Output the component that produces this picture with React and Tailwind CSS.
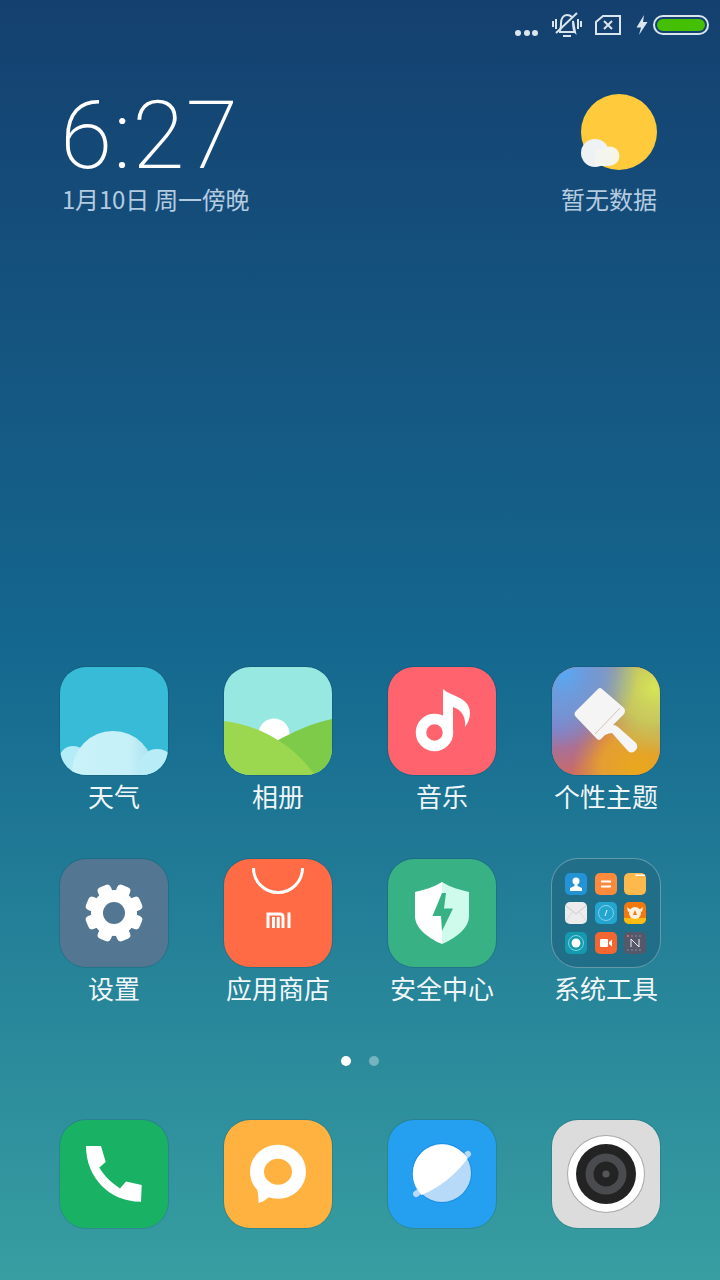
const cjk = "font-['Noto_Sans_CJK_SC','Liberation_Sans',sans-serif]"

function Icon({ children, className = '' }) {
  return (
    <div className={`w-[108px] h-[108px] rounded-[26px] overflow-hidden ring-1 ring-black/10 ${className}`}>
      <svg width="108" height="108" viewBox="0 0 108 108" className="block">
        {children}
      </svg>
    </div>
  )
}

function Weather() {
  return (
    <Icon className="bg-[#38bbd6]">
      <defs>
        <linearGradient id="cloud" x1="0" y1="0" x2="1" y2="0">
          <stop offset="0" stopColor="#c9f2f9" />
          <stop offset="0.7" stopColor="#c6f0f8" />
          <stop offset="1" stopColor="#a5e0ee" />
        </linearGradient>
      </defs>
      <circle cx="13" cy="93" r="14" fill="#b4ecf8" />
      <circle cx="53" cy="105" r="41" fill="url(#cloud)" />
      <circle cx="97" cy="100" r="18" fill="#b8edf8" />
    </Icon>
  )
}

function Gallery() {
  return (
    <Icon className="bg-[#97e8e1]">
      <circle cx="50" cy="67" r="15.5" fill="#fff" />
      <path d="M108 52 C86 57 68 65 51 75 L70 108 L108 108 Z" fill="#7ecb4a" />
      <path d="M0 54 C32 58 66 74 91 108 L0 108 Z" fill="#9bd850" />
    </Icon>
  )
}

function Music() {
  return (
    <Icon className="bg-[#fe636e]">
      <circle cx="46.5" cy="65.5" r="13.5" fill="none" stroke="#fff" strokeWidth="10.5" />
      <path d="M55 22 C62 29 82 30 82 46 C82 51 80 56 77 60 C78 52 75 43 65 40 L65 66 L55 66 Z" fill="#fff" />
    </Icon>
  )
}

function Theme() {
  return (
    <Icon className="bg-[#c08a70]">
      <defs>
        <radialGradient id="t1" cx="0.1" cy="0.05" r="0.7">
          <stop offset="0" stopColor="#58a8f4" />
          <stop offset="0.55" stopColor="#6a9ce0" stopOpacity="0.8" />
          <stop offset="1" stopColor="#6a9ce0" stopOpacity="0" />
        </radialGradient>
        <radialGradient id="t2" cx="0.95" cy="0.2" r="0.62">
          <stop offset="0" stopColor="#d6e656" />
          <stop offset="0.5" stopColor="#c5d85e" stopOpacity="0.8" />
          <stop offset="1" stopColor="#a8cc80" stopOpacity="0" />
        </radialGradient>
        <radialGradient id="t3" cx="0.8" cy="0.95" r="0.62">
          <stop offset="0" stopColor="#e9a81c" />
          <stop offset="0.55" stopColor="#e8a828" stopOpacity="0.85" />
          <stop offset="1" stopColor="#e8a828" stopOpacity="0" />
        </radialGradient>
        <radialGradient id="t4" cx="0.05" cy="0.55" r="0.45">
          <stop offset="0" stopColor="#8c76c0" />
          <stop offset="1" stopColor="#8c76c0" stopOpacity="0" />
        </radialGradient>
      </defs>
      <rect width="108" height="108" fill="#c96a68" />
      <rect width="108" height="108" fill="url(#t3)" />
      <rect width="108" height="108" fill="url(#t2)" />
      <rect width="108" height="108" fill="url(#t4)" />
      <rect width="108" height="108" fill="url(#t1)" />
      <path
        d="M46 22 Q48 20 50 22 L72 41 Q74 44 72 47 L61 58 Q64 58 66 60 L84 76 Q87 80 83 84 Q79 87 76 84 L60 66 Q57 66 53 68 L49 72 Q47 74 45 72 L24 50 Q21 47 24 44 Z"
        fill="#f5f5f5"
      />
      <line x1="68" y1="41" x2="43" y2="67" stroke="#c9b8a0" strokeWidth="0.8" />
    </Icon>
  )
}

function Settings() {
  const angles = [22.5, 67.5, 112.5, 157.5, 202.5, 247.5, 292.5, 337.5]
  return (
    <Icon className="bg-[#537692]">
      <circle cx="54" cy="54" r="23" fill="#fff" />
      {angles.map((a) => (
        <rect key={a} x="47" y="25" width="14" height="14" rx="4" fill="#fff" transform={`rotate(${a} 54 54)`} />
      ))}
      <circle cx="54" cy="54" r="11" fill="#537692" />
    </Icon>
  )
}

function Store() {
  return (
    <Icon className="bg-[#fe6b45]">
      <path d="M29.5 9 A24.5 24.5 0 0 0 78.5 9" fill="none" stroke="#fff" strokeWidth="3" />
      <path d="M44 69 V55 H56 Q59 55 59 58 V69 M49.5 69 V58 M54.2 69 V58" fill="none" stroke="#fff" strokeWidth="3" />
      <rect x="63.5" y="53.5" width="3" height="15.5" fill="#fff" />
    </Icon>
  )
}

function Security() {
  return (
    <Icon className="bg-[#38b185]">
      <path d="M54 23 C46 28 36 31 27 33 L27 57 C27 70 42 80 54 85 Z" fill="#fff" />
      <path d="M54 23 C62 28 72 31 81 33 L81 57 C81 70 66 80 54 85 Z" fill="#cffbec" />
      <path d="M54 34 L44.5 57 L53 57 L54 72 L65 49.5 L56 49.5 L58 34 Z" fill="#38b185" />
    </Icon>
  )
}

function Mini({ bg, children }) {
  return (
    <div className={`w-[22px] h-[22px] rounded-[5px] overflow-hidden ${bg}`}>
      <svg width="22" height="22" viewBox="0 0 22 22" className="block">
        {children}
      </svg>
    </div>
  )
}

function Folder() {
  return (
    <div className="w-[110px] h-[110px] -m-px rounded-[27px] bg-[#216e88] border border-white/30 grid grid-cols-3 gap-x-[7px] gap-y-[7.5px] px-[13px] py-[13.5px]">
      <Mini bg="bg-[#2393d6]">
        <circle cx="11" cy="8" r="3.5" fill="#fff" />
        <path d="M9.5 11 H12.5 V13 L17 15 V18 H5 V15 L9.5 13 Z" fill="#fff" />
      </Mini>
      <Mini bg="bg-[#fe8a3c]">
        <rect x="6" y="7.5" width="10" height="2" fill="#fff" />
        <rect x="6" y="12.5" width="10" height="2" fill="#fff" />
      </Mini>
      <Mini bg="bg-[#fdb94c]">
        <path d="M11 1.5 L21 1.5 V3 H12 Z" fill="#fff" />
      </Mini>
      <Mini bg="bg-[#ececec]">
        <path d="M0 3 L11 12 L22 3" fill="none" stroke="#c9c9c9" strokeWidth="1" />
        <path d="M0 20 L8 9 M22 20 L14 9" stroke="#d8d8d8" strokeWidth="1" />
      </Mini>
      <Mini bg="bg-[#24a5cf]">
        <circle cx="11" cy="11" r="7.5" fill="none" stroke="#9adcee" strokeWidth="0.8" />
        <path d="M12 8 L10 14" stroke="#d8f3fa" strokeWidth="1" />
      </Mini>
      <Mini bg="bg-[#f3780e]">
        <rect y="16" width="22" height="6" fill="#fdbb13" />
        <circle cx="11" cy="11" r="6" fill="#fff2de" />
        <path d="M3 5 L7 8 L4 10 Z M19 5 L15 8 L18 10 Z" fill="#fff2de" />
        <path d="M11 8 L13 13 H9 Z" fill="#f3780e" />
      </Mini>
      <Mini bg="bg-[#149aae]">
        <circle cx="11" cy="11" r="7.5" fill="none" stroke="#a0e0e6" strokeWidth="0.8" />
        <circle cx="11" cy="11" r="4.5" fill="#fff" />
      </Mini>
      <Mini bg="bg-[#f36632]">
        <rect x="5" y="7" width="8" height="8" rx="1" fill="#fff" />
        <path d="M14 10 L17 7.5 V14.5 L14 12 Z" fill="#fff" />
      </Mini>
      <Mini bg="bg-[#54586a]">
        <path d="M7 15 V7 L15 15 V7" fill="none" stroke="#f0f0f0" strokeWidth="1" />
        <rect x="3" y="3" width="2" height="2" fill="#e8604c" />
        <path d="M7 4 H19 M3 18 H19" stroke="#8a8d9a" strokeWidth="1" strokeDasharray="2 2" />
      </Mini>
    </div>
  )
}

function Phone() {
  return (
    <Icon className="bg-[#19b265]">
      <path
        d="M26 26 H41 L45.7 42 L39.3 47.5 C44 56 52 63 60 68.5 L66 61.5 L81.7 65 L81 81.7 C50 82 26 58 26 26 Z"
        fill="#fff"
      />
    </Icon>
  )
}

function Message() {
  return (
    <Icon className="bg-[#ffb23f]">
      <path d="M33 68 C34 74 35 79 34.3 83 C39 82 43 79 47 75 Z" fill="#fff" />
      <ellipse cx="54" cy="51.7" rx="21" ry="20" fill="none" stroke="#fff" strokeWidth="14" />
    </Icon>
  )
}

function Browser() {
  return (
    <Icon className="bg-[#259ff0]">
      <line x1="28" y1="74" x2="80" y2="34" stroke="#b8daf9" strokeWidth="6" strokeLinecap="round" />
      <circle cx="54" cy="53" r="30" fill="#1a8fe6" />
      <circle cx="54" cy="53" r="29" fill="#b8daf9" />
      <path d="M80 38 C66 57 50 68 33.5 75 A29 29 0 0 1 75 33 Q78 35 80 38 Z" fill="#fff" />
    </Icon>
  )
}

function Camera() {
  return (
    <Icon className="bg-[#dcdcdc]">
      <circle cx="54" cy="54" r="39" fill="#a9a9a9" />
      <circle cx="54" cy="54" r="38" fill="#fff" />
      <circle cx="54" cy="54" r="30" fill="#232323" />
      <circle cx="54" cy="54" r="16.5" fill="none" stroke="#4a4b4e" strokeWidth="8" />
      <circle cx="54" cy="54" r="3.6" fill="#55565a" />
    </Icon>
  )
}

const rows = [
  [
    { label: '天气', icon: <Weather /> },
    { label: '相册', icon: <Gallery /> },
    { label: '音乐', icon: <Music /> },
    { label: '个性主题', icon: <Theme /> },
  ],
  [
    { label: '设置', icon: <Settings /> },
    { label: '应用商店', icon: <Store /> },
    { label: '安全中心', icon: <Security /> },
    { label: '系统工具', icon: <Folder /> },
  ],
]

function StatusBar() {
  return (
    <div className="h-[50px] flex justify-end items-start pr-[11px] text-[#dbe5ee]">
      <svg width="24" height="8" viewBox="0 0 24 8" className="mt-[29px]">
        <circle cx="4" cy="4" r="3" fill="currentColor" />
        <circle cx="13" cy="4" r="3" fill="currentColor" />
        <circle cx="21" cy="4" r="3" fill="currentColor" />
      </svg>
      <svg width="30" height="26" viewBox="0 0 30 26" fill="none" stroke="currentColor" strokeWidth="2" className="ml-[14px] mt-[12px]">
        <path d="M1 9 V15 M4 7 V17 M26 7 V17 M29 9 V15" />
        <path d="M7 20 C9 18 9 15 9 11 C9 7 11 3 15 3 C17 3 19 4 20 5 M21 9 C21 14 21 18 23 20 Z M7 20 H23" />
        <path d="M11 24 H19" />
        <path d="M4 21 L25 1" />
      </svg>
      <svg width="26" height="20" viewBox="0 0 26 20" fill="none" stroke="currentColor" strokeWidth="2" className="ml-[13px] mt-[15px]">
        <path d="M8 1 H25 V19 H1 V7 Z" />
        <path d="M9 6 L17 14 M17 6 L9 14" />
      </svg>
      <svg width="12" height="20" viewBox="0 0 12 20" className="ml-[15px] mt-[15px]">
        <path d="M8 0 L0.5 12.5 H5 L3 20 L11.5 7 H7 Z" fill="currentColor" />
      </svg>
      <div className="ml-[5px] mt-[15px] w-[56px] h-[20px] rounded-full border-2 border-[#dbe5ee] p-[2px]">
        <div className="w-full h-full rounded-full bg-[#45c000]" />
      </div>
    </div>
  )
}

export default function App() {
  return (
    <div className={`w-[720px] h-[1280px] flex flex-col overflow-hidden bg-linear-to-b from-[#14406f] via-[#14678f] via-50% to-[#389ea1] ${cjk}`}>
      <StatusBar />

      {/* clock + weather */}
      <div className="flex justify-between pl-[62px] pr-[63px] mt-[44px]">
        <div>
          <div className="font-['Roboto',sans-serif] font-extralight text-[95px] tracking-[1px] leading-[80px] text-white -ml-[2px] mt-[2px]">6:27</div>
          <div className="text-[24px] tracking-[-0.2px] leading-[36px] text-[#b4cbe0] mt-[5px]">1月10日 周一傍晚</div>
        </div>
        <div className="flex flex-col items-end">
          <svg width="78" height="78" viewBox="0 0 78 78" className="-mt-px -mr-px">
            <circle cx="39" cy="39" r="38" fill="#ffcb3c" />
            <circle cx="15" cy="60" r="14" fill="#eef2f4" />
            <circle cx="30" cy="63" r="9.5" fill="#f7f5e8" />
            <rect x="15" y="56" width="15" height="17" fill="#f5f5f0" />
          </svg>
          <div className="text-[24px] leading-[36px] text-[#b4cbe0] mt-[10px]">暂无数据</div>
        </div>
      </div>

      <div className="flex-1" />

      <div className="grid grid-cols-4 gap-y-[42px] px-8">
        {rows.flat().map((app) => (
          <div key={app.label} className="flex flex-col items-center h-[150px]">
            {app.icon}
            <div className="text-[26px] leading-[42px] text-white/95 whitespace-nowrap">{app.label}</div>
          </div>
        ))}
      </div>

      <div className="flex justify-center gap-[18px] mt-[47px]">
        <div className="w-[10px] h-[10px] rounded-full bg-white" />
        <div className="w-[10px] h-[10px] rounded-full bg-white/35" />
      </div>

      <div className="grid grid-cols-4 px-8 mt-[54px] pb-[52px] justify-items-center">
        <Phone />
        <Message />
        <Browser />
        <Camera />
      </div>
    </div>
  )
}
